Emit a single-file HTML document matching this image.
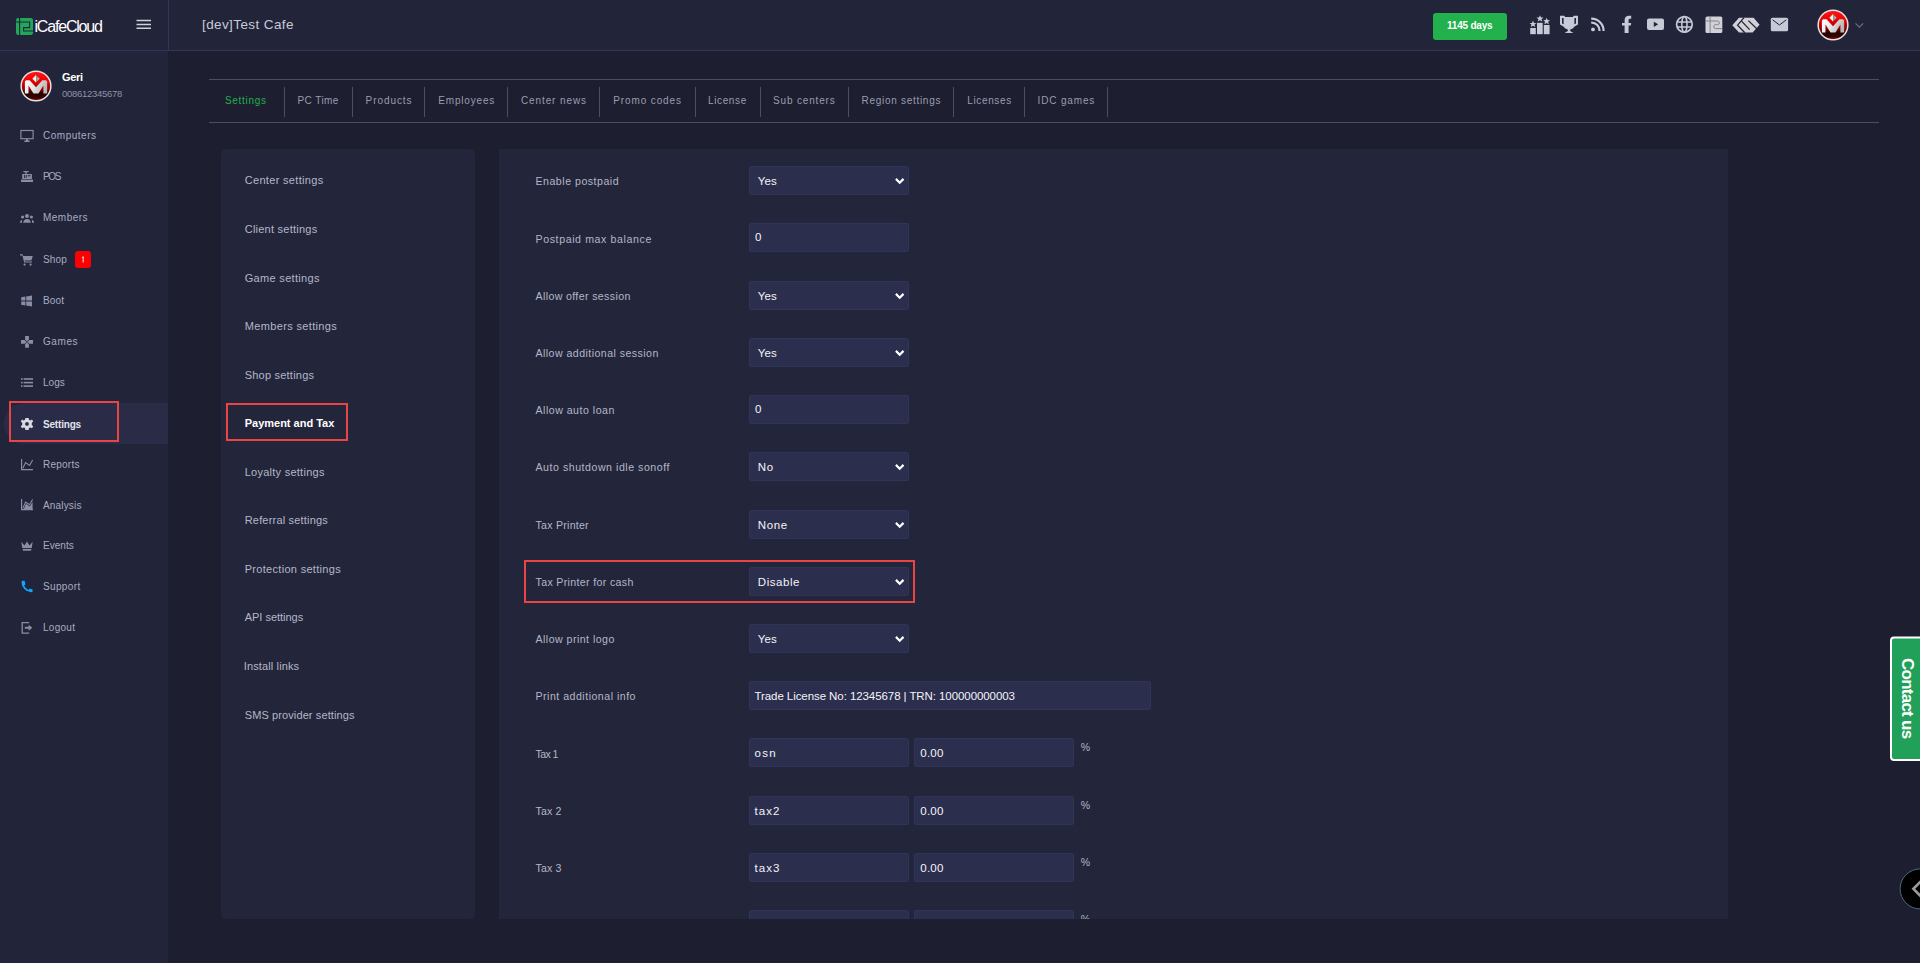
<!DOCTYPE html>
<html><head><meta charset="utf-8"><title>iCafeCloud</title>
<style>
html,body{margin:0;padding:0;width:1920px;height:963px;overflow:hidden;background:#1d1e2f;font-family:"Liberation Sans",sans-serif;}
.t{position:absolute;white-space:pre;line-height:1;}
.a{position:absolute;}
svg{position:absolute;overflow:visible;}
</style></head><body>
<!-- header -->
<div class="a" style="left:0;top:0;width:1920px;height:50px;background:#22243a;"></div>
<div class="a" style="left:0;top:50px;width:1920px;height:1px;background:#33365a;"></div>
<div class="a" style="left:168px;top:0;width:1px;height:50px;background:#33365a;"></div>
<!-- sidebar -->
<div class="a" style="left:0;top:51px;width:168px;height:912px;background:#22243a;"></div>
<!-- active settings bg -->
<div class="a" style="left:4px;top:403px;width:164px;height:41px;background:#292b47;border-radius:20px 0 0 20px;"></div>
<!-- tabs lines -->
<div class="a" style="left:209px;top:79px;width:1670px;height:1px;background:#4b4e64;"></div>
<div class="a" style="left:209px;top:122px;width:1670px;height:1px;background:#4b4e64;"></div>
<div class="a" style="left:284px;top:87px;width:1px;height:30px;background:#4b4e64;"></div><div class="a" style="left:352px;top:87px;width:1px;height:30px;background:#4b4e64;"></div><div class="a" style="left:424px;top:87px;width:1px;height:30px;background:#4b4e64;"></div><div class="a" style="left:507px;top:87px;width:1px;height:30px;background:#4b4e64;"></div><div class="a" style="left:599px;top:87px;width:1px;height:30px;background:#4b4e64;"></div><div class="a" style="left:695px;top:87px;width:1px;height:30px;background:#4b4e64;"></div><div class="a" style="left:760px;top:87px;width:1px;height:30px;background:#4b4e64;"></div><div class="a" style="left:848px;top:87px;width:1px;height:30px;background:#4b4e64;"></div><div class="a" style="left:953px;top:87px;width:1px;height:30px;background:#4b4e64;"></div><div class="a" style="left:1024px;top:87px;width:1px;height:30px;background:#4b4e64;"></div><div class="a" style="left:1107px;top:87px;width:1px;height:30px;background:#4b4e64;"></div>
<!-- panels -->
<div class="a" style="left:221px;top:149px;width:254px;height:770px;background:#23253a;border-radius:5px;"></div>
<div class="a" style="left:499px;top:149px;width:1229px;height:770px;background:#23253a;overflow:hidden;"></div>
<svg width="1920" height="963" viewBox="0 0 1920 963" style="left:0;top:0">
<!-- logo icon -->
<rect x="16" y="18" width="17" height="17" rx="2.2" fill="#21a65a"/>
<path d="M19.6 18 V35 M16 22 H29.6 V27.6 H23.6 V31 H33" stroke="#22243a" stroke-width="1.1" fill="none"/>
<!-- hamburger -->
<path d="M136.5 20.6 H151 M136.5 24.4 H151 M136.5 28.2 H151" stroke="#cfd1dc" stroke-width="1.5"/>
<g fill="#8a8da5" stroke="none">
<!-- computers -->
<rect x="20.9" y="130.5" width="12.2" height="8.2" fill="none" stroke="#8a8da5" stroke-width="1.15"/>
<path d="M26 139 H28 V140.6 H29.6 V142 H24.4 V140.6 H26 Z"/>
<!-- POS -->
<path d="M23.3 171 H28.6 V172.8 H26.4 V174 H22.2 V179 H31.9 V174 H26.4 V172.8" fill="none" stroke="#8a8da5" stroke-width="0"/>
<rect x="23.4" y="171" width="5.2" height="1.3"/>
<rect x="25.4" y="172" width="1.2" height="2"/>
<rect x="22.2" y="174" width="9.7" height="5"/>
<rect x="21" y="179.6" width="12" height="2.4"/>
<rect x="24" y="175" width="0.9" height="3" fill="#22243a"/>
<rect x="25.8" y="175" width="0.9" height="3" fill="#22243a"/>
<rect x="27.8" y="175.2" width="2.6" height="1.1" fill="#22243a"/>
<!-- members -->
<circle cx="27" cy="215.9" r="2"/>
<circle cx="22.6" cy="217" r="1.6"/>
<circle cx="31.4" cy="217" r="1.6"/>
<path d="M23.2 222.8 Q23.6 219 27 219 Q30.4 219 30.8 222.8 Z"/>
<path d="M19.8 222.8 Q20 220.2 22.3 219.8 Q21.8 221 22 222.8 Z"/>
<path d="M34.2 222.8 Q34 220.2 31.7 219.8 Q32.2 221 32 222.8 Z"/>
<!-- shop cart -->
<path d="M20 254.2 H22.6 L23.3 256 H32.8 L31.4 260.4 H24.6 L25 261.5 H32 V262.6 H24.2 L22.4 255.4 H20 Z"/>
<circle cx="24.6" cy="264.6" r="1.1"/>
<circle cx="30.6" cy="264.6" r="1.1"/>
<!-- boot windows -->
<path d="M21.2 297.2 L25.4 296.6 V300.6 H21.2 Z M26.2 296.5 L32 295.5 V300.6 H26.2 Z M21.2 301.4 H25.4 V305.4 L21.2 304.8 Z M26.2 301.4 H32 V306.6 L26.2 305.6 Z"/>
<!-- games -->
<path d="M25.1 336 H28.9 V339.6 L27 341.6 L25.1 339.6 Z M25.1 347.8 H28.9 V344.2 L27 342.2 L25.1 344.2 Z M21 340 V343.8 H24.6 L26.6 341.9 L24.6 340 Z M33 340 V343.8 H29.4 L27.4 341.9 L29.4 340 Z"/>
<!-- logs -->
<rect x="21" y="378.2" width="1.6" height="1.6"/><rect x="23.6" y="378.2" width="9.4" height="1.6"/>
<rect x="21" y="381.8" width="1.6" height="1.6"/><rect x="23.6" y="381.8" width="9.4" height="1.6"/>
<rect x="21" y="385.3" width="1.6" height="1.6"/><rect x="23.6" y="385.3" width="9.4" height="1.6"/>
<!-- reports -->
<path d="M21.6 459 V469.6 H33" fill="none" stroke="#8a8da5" stroke-width="1.2"/>
<path d="M22.8 468.2 L25.6 462.6 L29.6 465.4 L32.6 460" fill="none" stroke="#8a8da5" stroke-width="1.1"/>
<!-- analysis -->
<path d="M21.6 499 V509.6 H33" fill="none" stroke="#8a8da5" stroke-width="1.2"/>
<path d="M22.8 508.4 L25.6 502 L29.6 504.8 L32.6 499.4" fill="none" stroke="#8a8da5" stroke-width="1.1"/>
<path d="M23.8 509 L26 503.8 L29.8 506.4 L32.6 502 V509 Z"/>
<!-- events crown -->
<path d="M21.4 541.8 L24.4 545.4 L27 541.6 L29.6 545.4 L32.6 541.8 L31.8 548 H22.2 Z"/>
<rect x="22.8" y="548.9" width="8.4" height="1.8"/>
<!-- logout -->
<path d="M29.2 622.6 H22.2 V633.1 H29.2" fill="none" stroke="#8a8da5" stroke-width="1.3"/>
<path d="M24.8 626.8 H28.6 V624.8 L32.4 627.8 L28.6 630.8 V628.8 H24.8 Z"/>
</g>
<!-- settings gear white -->
<g transform="translate(27,423.9)">
<path fill="#d8d9e2" fill-rule="evenodd" d="M-1.6 -6 H1.6 L2 -4.2 L3.3 -3.5 L5 -4.3 L6.2 -2.3 L4.8 -1.1 V1.1 L6.2 2.3 L5 4.3 L3.3 3.5 L2 4.2 L1.6 6 H-1.6 L-2 4.2 L-3.3 3.5 L-5 4.3 L-6.2 2.3 L-4.8 1.1 V-1.1 L-6.2 -2.3 L-5 -4.3 L-3.3 -3.5 L-2 -4.2 Z M0 -1.9 A1.9 1.9 0 1 0 0 1.9 A1.9 1.9 0 1 0 0 -1.9 Z"/>
</g>
<!-- support phone -->
<path fill="#0aa8ff" d="M21.6 582.4 Q21.4 581 22.6 580.8 H24.6 L25.4 584.6 L24 585.6 Q25.6 588.8 28.6 590 L29.6 588.6 L32.6 589.6 V591.4 Q32.4 592.2 31.4 592.2 Q25.4 591.8 22.6 586.6 Q21.6 584.6 21.6 582.4 Z"/>
<!-- badge -->
<rect x="75" y="251" width="16" height="17" rx="3" fill="#ff0000"/>
<path d="M82 257 L83.6 256.3 V262.4 H82.7 V257.6 L82 257.9 Z" fill="#ffffff"/>
</svg>
<svg width="1920" height="963" viewBox="0 0 1920 963" style="left:0;top:0">
<defs>
<linearGradient id="rg" x1="0" y1="0" x2="0" y2="1">
<stop offset="0.05" stop-color="#ff1212"/><stop offset="0.35" stop-color="#e80000"/><stop offset="0.6" stop-color="#a00000"/><stop offset="0.76" stop-color="#2a0000"/><stop offset="0.9" stop-color="#300000"/><stop offset="1" stop-color="#8a0000"/>
</linearGradient>
<linearGradient id="mg" x1="0" y1="0" x2="1" y2="0.3"><stop offset="0" stop-color="#ffffff"/><stop offset="0.5" stop-color="#e6e6e6"/><stop offset="1" stop-color="#b8b8b8"/></linearGradient>
<linearGradient id="dg" x1="0" y1="0" x2="1" y2="0"><stop offset="0.45" stop-color="#f4f4f4"/><stop offset="0.55" stop-color="#8c8c8c"/><stop offset="1" stop-color="#cfcfcf"/></linearGradient>
<g id="av">
<circle cx="16" cy="16" r="15.6" fill="#e4e4e4"/>
<circle cx="16" cy="16" r="14.1" fill="url(#rg)"/>
<path d="M4.9 23.6 V11.5 L6 10.3 H9.6 L16 17.2 L22.4 10.3 H26 L27.15 11.5 V23.6 H23.4 V15.5 L18.5 23.6 H13.5 L8.5 15.5 V23.6 Z" fill="url(#mg)"/>
<path d="M16 5.1 L19.6 8.8 L16 12.6 L12.4 8.8 Z" fill="url(#dg)"/>
</g>
</defs>
<use href="#av" x="1817" y="9"/>
<use href="#av" x="20" y="70"/>
<!-- chevron dropdown -->
<path d="M1855.5 23.4 L1859.4 27.2 L1863.2 23.4" fill="none" stroke="#6d7196" stroke-width="1.1"/>
<!-- green button -->
<rect x="1433" y="13" width="74" height="27" rx="3" fill="#22b14c"/>
<g fill="#c6c9d6">
<!-- ranking -->
<rect x="1530.2" y="28" width="5.6" height="6.2"/>
<rect x="1537" y="22.8" width="5.7" height="11.4"/>
<rect x="1543.8" y="25" width="5.8" height="9.2"/>
<path id="st" d="M0 -3.1 L0.9 -1 L3.1 -0.9 L1.4 0.5 L2 2.7 L0 1.5 L-2 2.7 L-1.4 0.5 L-3.1 -0.9 L-0.9 -1 Z" transform="translate(1533,24) scale(1.12)"/>
<use href="#st" x="7" y="-5.4"/>
<use href="#st" x="13.6" y="-2.8"/>
<!-- trophy -->
<path fill-rule="evenodd" d="M1560 15.8 H1564.4 L1565 17 H1573 L1573.6 15.8 H1578 V24.6 L1574.6 26.6 Q1573 29 1570.2 29.6 V31 L1573.4 33 H1564.6 L1567.8 31 V29.6 Q1565 29 1563.4 26.6 L1560 24.6 Z M1562 18 V23.4 L1563.6 24.2 V18 Z M1576 18 V23.4 L1574.4 24.2 V18 Z"/>
<!-- rss -->
<circle cx="1593" cy="29.4" r="1.9"/>
<path d="M1591.2 22.6 A8 8 0 0 1 1599.6 31" fill="none" stroke="#c6c9d6" stroke-width="2.2"/>
<path d="M1591.2 18.6 A12.2 12.2 0 0 1 1603.6 31" fill="none" stroke="#c6c9d6" stroke-width="2.2"/>
<!-- facebook f -->
<path d="M1624.6 33 V25.6 H1622 V23 H1624.6 V20.4 Q1624.6 15.8 1629 15.8 H1631.2 V18.8 H1629.8 Q1628.6 18.8 1628.6 20 V23 H1631.2 L1630.8 25.6 H1628.6 V33 Z"/>
<!-- youtube -->
<path fill-rule="evenodd" d="M1649 18.6 H1662 Q1664 18.6 1664 20.6 V28.1 Q1664 30.1 1662 30.1 H1649 Q1647 30.1 1647 28.1 V20.6 Q1647 18.6 1649 18.6 Z M1653.8 21.8 V26.9 L1658.2 24.35 Z"/>
<!-- globe -->
<circle cx="1684.4" cy="24.4" r="7.8" fill="none" stroke="#c6c9d6" stroke-width="1.7"/>
<ellipse cx="1684.4" cy="24.4" rx="2.6" ry="7.8" fill="none" stroke="#c6c9d6" stroke-width="1.5"/>
<path d="M1677 21.9 H1691.8 M1677 26.9 H1691.8" stroke="#c6c9d6" stroke-width="1.5"/>
</g>
<!-- i2 -->
<rect x="1705.5" y="16.4" width="16.8" height="16.6" rx="1.6" fill="#d2d2d6"/>
<path d="M1710.1 16.4 V33 M1705.5 21 H1717.5 Q1719.4 21 1719.4 22.8 Q1719.4 24.6 1717.5 24.6 H1715.6 Q1713.8 24.6 1713.8 26.6 Q1713.8 28.6 1715.6 28.6 H1722.3" stroke="#80828f" stroke-width="1" fill="none"/>
<!-- gg logo -->
<path d="M1732.3 25.2 L1739 17.8 H1753.6 L1759.6 24.8 L1752.6 32.6 H1739 Z" fill="#d2d2d6"/>
<path d="M1744 17.6 L1737.6 25.2 L1744.8 32.8 M1741.8 21.4 L1749.6 29.6 M1748.4 20.6 L1756.8 28.8" stroke="#22243a" stroke-width="1.3" fill="none"/>
<!-- mail -->
<rect x="1770.8" y="17.7" width="17.3" height="13.6" rx="1.5" fill="#c6c9d6"/>
<path d="M1772.6 19.8 L1779.45 25 L1786.3 19.8" fill="none" stroke="#22243a" stroke-width="1"/>
<!-- contact us -->
<rect x="1891" y="637.5" width="32" height="122.5" rx="3" fill="#21a05a" stroke="#ffffff" stroke-width="2"/>
<!-- circle btn -->
<circle cx="1920.1" cy="888.9" r="20" fill="#000000" stroke="#4a6a80" stroke-width="1"/>
<path d="M1921.5 880.6 L1913.4 888.8 L1921.5 897" fill="none" stroke="#9c9c9c" stroke-width="2.6"/>
</svg>
<div class="a" style="left:0;top:0;width:1920px;height:919px;overflow:hidden"><div style="position:absolute;left:749px;top:166px;width:160px;height:29px;background:#2c2e4e;border:1px solid #313459;border-radius:2px;box-sizing:border-box;"></div><div style="position:absolute;left:749px;top:223px;width:160px;height:29px;background:#2c2e4e;border:1px solid #313459;border-radius:2px;box-sizing:border-box;"></div><div style="position:absolute;left:749px;top:281px;width:160px;height:29px;background:#2c2e4e;border:1px solid #313459;border-radius:2px;box-sizing:border-box;"></div><div style="position:absolute;left:749px;top:338px;width:160px;height:29px;background:#2c2e4e;border:1px solid #313459;border-radius:2px;box-sizing:border-box;"></div><div style="position:absolute;left:749px;top:395px;width:160px;height:29px;background:#2c2e4e;border:1px solid #313459;border-radius:2px;box-sizing:border-box;"></div><div style="position:absolute;left:749px;top:452px;width:160px;height:29px;background:#2c2e4e;border:1px solid #313459;border-radius:2px;box-sizing:border-box;"></div><div style="position:absolute;left:749px;top:510px;width:160px;height:29px;background:#2c2e4e;border:1px solid #313459;border-radius:2px;box-sizing:border-box;"></div><div style="position:absolute;left:749px;top:567px;width:160px;height:29px;background:#2c2e4e;border:1px solid #313459;border-radius:2px;box-sizing:border-box;"></div><div style="position:absolute;left:749px;top:624px;width:160px;height:29px;background:#2c2e4e;border:1px solid #313459;border-radius:2px;box-sizing:border-box;"></div><div style="position:absolute;left:749px;top:681px;width:402px;height:29px;background:#2c2e4e;border:1px solid #313459;border-radius:2px;box-sizing:border-box;"></div><div style="position:absolute;left:749px;top:738px;width:160px;height:29px;background:#2c2e4e;border:1px solid #313459;border-radius:2px;box-sizing:border-box;"></div><div style="position:absolute;left:914px;top:738px;width:160px;height:29px;background:#2c2e4e;border:1px solid #313459;border-radius:2px;box-sizing:border-box;"></div><div style="position:absolute;left:749px;top:796px;width:160px;height:29px;background:#2c2e4e;border:1px solid #313459;border-radius:2px;box-sizing:border-box;"></div><div style="position:absolute;left:914px;top:796px;width:160px;height:29px;background:#2c2e4e;border:1px solid #313459;border-radius:2px;box-sizing:border-box;"></div><div style="position:absolute;left:749px;top:853px;width:160px;height:29px;background:#2c2e4e;border:1px solid #313459;border-radius:2px;box-sizing:border-box;"></div><div style="position:absolute;left:914px;top:853px;width:160px;height:29px;background:#2c2e4e;border:1px solid #313459;border-radius:2px;box-sizing:border-box;"></div><div style="position:absolute;left:749px;top:910px;width:160px;height:29px;background:#2c2e4e;border:1px solid #313459;border-radius:2px;box-sizing:border-box;"></div><div style="position:absolute;left:914px;top:910px;width:160px;height:29px;background:#2c2e4e;border:1px solid #313459;border-radius:2px;box-sizing:border-box;"></div>
<span class="t" style="left:202.00px;top:18.00px;font-size:13.5px;font-weight:400;color:#c8cbd8;letter-spacing:0.401px;">[dev]Test Cafe</span><span class="t" style="left:1447.00px;top:21.00px;font-size:10px;font-weight:700;color:#ffffff;letter-spacing:-0.213px;">1145 days</span><span class="t" style="left:34.50px;top:19.00px;font-size:16px;font-weight:400;color:#ffffff;letter-spacing:-1.195px;">iCafeCloud</span><span class="t" style="left:62.00px;top:72.00px;font-size:11px;font-weight:700;color:#ffffff;letter-spacing:-0.318px;">Geri</span><span class="t" style="left:62.00px;top:89.00px;font-size:9.5px;font-weight:400;color:#8e92a8;letter-spacing:-0.283px;">008612345678</span><span class="t" style="left:43.00px;top:131.00px;font-size:10px;font-weight:400;color:#a9acc0;letter-spacing:0.512px;">Computers</span><span class="t" style="left:43.00px;top:172.00px;font-size:10px;font-weight:400;color:#a9acc0;letter-spacing:-1.324px;">POS</span><span class="t" style="left:43.00px;top:213.00px;font-size:10px;font-weight:400;color:#a9acc0;letter-spacing:0.471px;">Members</span><span class="t" style="left:43.00px;top:255.00px;font-size:10px;font-weight:400;color:#a9acc0;letter-spacing:0.136px;">Shop</span><span class="t" style="left:43.00px;top:296.00px;font-size:10px;font-weight:400;color:#a9acc0;letter-spacing:0.169px;">Boot</span><span class="t" style="left:43.00px;top:337.00px;font-size:10px;font-weight:400;color:#a9acc0;letter-spacing:0.592px;">Games</span><span class="t" style="left:43.00px;top:378.00px;font-size:10px;font-weight:400;color:#a9acc0;letter-spacing:0.005px;">Logs</span><span class="t" style="left:43.00px;top:420.00px;font-size:10px;font-weight:700;color:#e2e3ea;letter-spacing:-0.184px;">Settings</span><span class="t" style="left:43.00px;top:460.00px;font-size:10px;font-weight:400;color:#a9acc0;letter-spacing:0.231px;">Reports</span><span class="t" style="left:43.00px;top:501.00px;font-size:10px;font-weight:400;color:#a9acc0;letter-spacing:0.166px;">Analysis</span><span class="t" style="left:43.00px;top:541.00px;font-size:10px;font-weight:400;color:#a9acc0;letter-spacing:0.046px;">Events</span><span class="t" style="left:43.00px;top:582.00px;font-size:10px;font-weight:400;color:#a9acc0;letter-spacing:0.359px;">Support</span><span class="t" style="left:43.00px;top:623.00px;font-size:10px;font-weight:400;color:#a9acc0;letter-spacing:0.278px;">Logout</span><span class="t" style="left:225.00px;top:96.00px;font-size:10px;font-weight:400;color:#22b14c;letter-spacing:0.695px;">Settings</span><span class="t" style="left:297.40px;top:96.00px;font-size:10px;font-weight:400;color:#9a9db1;letter-spacing:0.440px;">PC Time</span><span class="t" style="left:365.60px;top:96.00px;font-size:10px;font-weight:400;color:#9a9db1;letter-spacing:0.920px;">Products</span><span class="t" style="left:438.30px;top:96.00px;font-size:10px;font-weight:400;color:#9a9db1;letter-spacing:0.817px;">Employees</span><span class="t" style="left:521.00px;top:96.00px;font-size:10px;font-weight:400;color:#9a9db1;letter-spacing:0.886px;">Center news</span><span class="t" style="left:613.30px;top:96.00px;font-size:10px;font-weight:400;color:#9a9db1;letter-spacing:0.878px;">Promo codes</span><span class="t" style="left:708.00px;top:96.00px;font-size:10px;font-weight:400;color:#9a9db1;letter-spacing:0.632px;">License</span><span class="t" style="left:773.00px;top:96.00px;font-size:10px;font-weight:400;color:#9a9db1;letter-spacing:0.834px;">Sub centers</span><span class="t" style="left:861.50px;top:96.00px;font-size:10px;font-weight:400;color:#9a9db1;letter-spacing:0.712px;">Region settings</span><span class="t" style="left:967.20px;top:96.00px;font-size:10px;font-weight:400;color:#9a9db1;letter-spacing:0.655px;">Licenses</span><span class="t" style="left:1037.50px;top:96.00px;font-size:10px;font-weight:400;color:#9a9db1;letter-spacing:0.848px;">IDC games</span><span class="t" style="left:244.70px;top:175.00px;font-size:11px;font-weight:400;color:#b4b7c8;letter-spacing:0.323px;">Center settings</span><span class="t" style="left:244.70px;top:224.00px;font-size:11px;font-weight:400;color:#b4b7c8;letter-spacing:0.244px;">Client settings</span><span class="t" style="left:244.70px;top:273.00px;font-size:11px;font-weight:400;color:#b4b7c8;letter-spacing:0.323px;">Game settings</span><span class="t" style="left:244.70px;top:321.00px;font-size:11px;font-weight:400;color:#b4b7c8;letter-spacing:0.353px;">Members settings</span><span class="t" style="left:244.70px;top:370.00px;font-size:11px;font-weight:400;color:#b4b7c8;letter-spacing:0.220px;">Shop settings</span><span class="t" style="left:244.70px;top:418.00px;font-size:11px;font-weight:700;color:#ffffff;letter-spacing:-0.003px;">Payment and Tax</span><span class="t" style="left:244.70px;top:467.00px;font-size:11px;font-weight:400;color:#b4b7c8;letter-spacing:0.259px;">Loyalty settings</span><span class="t" style="left:244.70px;top:515.00px;font-size:11px;font-weight:400;color:#b4b7c8;letter-spacing:0.188px;">Referral settings</span><span class="t" style="left:244.70px;top:564.00px;font-size:11px;font-weight:400;color:#b4b7c8;letter-spacing:0.306px;">Protection settings</span><span class="t" style="left:244.70px;top:612.00px;font-size:11px;font-weight:400;color:#b4b7c8;letter-spacing:-0.018px;">API settings</span><span class="t" style="left:243.70px;top:661.00px;font-size:11px;font-weight:400;color:#b4b7c8;letter-spacing:0.134px;">Install links</span><span class="t" style="left:244.70px;top:710.00px;font-size:11px;font-weight:400;color:#b4b7c8;letter-spacing:0.110px;">SMS provider settings</span><span class="t" style="left:535.50px;top:176.00px;font-size:10.6px;font-weight:400;color:#b4b7c8;letter-spacing:0.508px;">Enable postpaid</span><span class="t" style="left:535.50px;top:234.00px;font-size:10.6px;font-weight:400;color:#b4b7c8;letter-spacing:0.608px;">Postpaid max balance</span><span class="t" style="left:535.50px;top:291.00px;font-size:10.6px;font-weight:400;color:#b4b7c8;letter-spacing:0.370px;">Allow offer session</span><span class="t" style="left:535.50px;top:348.00px;font-size:10.6px;font-weight:400;color:#b4b7c8;letter-spacing:0.449px;">Allow additional session</span><span class="t" style="left:535.50px;top:405.00px;font-size:10.6px;font-weight:400;color:#b4b7c8;letter-spacing:0.496px;">Allow auto loan</span><span class="t" style="left:535.50px;top:462.00px;font-size:10.6px;font-weight:400;color:#b4b7c8;letter-spacing:0.534px;">Auto shutdown idle sonoff</span><span class="t" style="left:535.50px;top:520.00px;font-size:10.6px;font-weight:400;color:#b4b7c8;letter-spacing:0.250px;">Tax Printer</span><span class="t" style="left:535.50px;top:577.00px;font-size:10.6px;font-weight:400;color:#b4b7c8;letter-spacing:0.349px;">Tax Printer for cash</span><span class="t" style="left:535.50px;top:634.00px;font-size:10.6px;font-weight:400;color:#b4b7c8;letter-spacing:0.464px;">Allow print logo</span><span class="t" style="left:535.50px;top:691.00px;font-size:10.6px;font-weight:400;color:#b4b7c8;letter-spacing:0.494px;">Print additional info</span><span class="t" style="left:535.50px;top:749.00px;font-size:10.6px;font-weight:400;color:#b4b7c8;letter-spacing:-0.632px;">Tax 1</span><span class="t" style="left:535.50px;top:806.00px;font-size:10.6px;font-weight:400;color:#b4b7c8;letter-spacing:0.118px;">Tax 2</span><span class="t" style="left:535.50px;top:863.00px;font-size:10.6px;font-weight:400;color:#b4b7c8;letter-spacing:0.118px;">Tax 3</span><span class="t" style="left:757.80px;top:176.00px;font-size:11.5px;font-weight:400;color:#f4f4f8;letter-spacing:0.145px;">Yes</span><span class="t" style="left:755.00px;top:232.00px;font-size:11.5px;font-weight:400;color:#f4f4f8;letter-spacing:0.000px;">0</span><span class="t" style="left:757.80px;top:291.00px;font-size:11.5px;font-weight:400;color:#f4f4f8;letter-spacing:0.145px;">Yes</span><span class="t" style="left:757.80px;top:348.00px;font-size:11.5px;font-weight:400;color:#f4f4f8;letter-spacing:0.145px;">Yes</span><span class="t" style="left:755.00px;top:404.00px;font-size:11.5px;font-weight:400;color:#f4f4f8;letter-spacing:0.000px;">0</span><span class="t" style="left:757.80px;top:462.00px;font-size:11.5px;font-weight:400;color:#f4f4f8;letter-spacing:0.695px;">No</span><span class="t" style="left:757.80px;top:520.00px;font-size:11.5px;font-weight:400;color:#f4f4f8;letter-spacing:0.635px;">None</span><span class="t" style="left:757.80px;top:577.00px;font-size:11.5px;font-weight:400;color:#f4f4f8;letter-spacing:0.557px;">Disable</span><span class="t" style="left:757.80px;top:634.00px;font-size:11.5px;font-weight:400;color:#f4f4f8;letter-spacing:0.145px;">Yes</span><span class="t" style="left:754.50px;top:691.00px;font-size:11.5px;font-weight:400;color:#f4f4f8;letter-spacing:-0.075px;">Trade License No: 12345678 | TRN: 100000000003</span><span class="t" style="left:754.50px;top:748.00px;font-size:11.5px;font-weight:400;color:#f4f4f8;letter-spacing:1.277px;">osn</span><span class="t" style="left:920.30px;top:748.00px;font-size:11.5px;font-weight:400;color:#f4f4f8;letter-spacing:0.238px;">0.00</span><span class="t" style="left:1080.70px;top:742.00px;font-size:10.5px;font-weight:400;color:#b4b7c8;letter-spacing:0.000px;">%</span><span class="t" style="left:754.50px;top:806.00px;font-size:11.5px;font-weight:400;color:#f4f4f8;letter-spacing:1.020px;">tax2</span><span class="t" style="left:920.30px;top:806.00px;font-size:11.5px;font-weight:400;color:#f4f4f8;letter-spacing:0.238px;">0.00</span><span class="t" style="left:1080.70px;top:800.00px;font-size:10.5px;font-weight:400;color:#b4b7c8;letter-spacing:0.000px;">%</span><span class="t" style="left:754.50px;top:863.00px;font-size:11.5px;font-weight:400;color:#f4f4f8;letter-spacing:1.020px;">tax3</span><span class="t" style="left:920.30px;top:863.00px;font-size:11.5px;font-weight:400;color:#f4f4f8;letter-spacing:0.238px;">0.00</span><span class="t" style="left:1080.70px;top:857.00px;font-size:10.5px;font-weight:400;color:#b4b7c8;letter-spacing:0.000px;">%</span><span class="t" style="left:1080.70px;top:914.00px;font-size:10.5px;font-weight:400;color:#b4b7c8;letter-spacing:0.000px;">%</span></div><div class="a" style="left:9px;top:401px;width:110px;height:41px;border:2px solid #ea4444;box-sizing:border-box;"></div><div class="a" style="left:226px;top:403px;width:122px;height:38px;border:2px solid #ea4444;box-sizing:border-box;"></div><div class="a" style="left:524px;top:560px;width:391px;height:43px;border:2px solid #ea4444;box-sizing:border-box;"></div>
<svg width="1920" height="963" style="left:0;top:0"><path d="M895.9 178.9 L899.7 182.7 L903.5 178.9" fill="none" stroke="#ffffff" stroke-width="2.2"/><path d="M895.9 293.9 L899.7 297.7 L903.5 293.9" fill="none" stroke="#ffffff" stroke-width="2.2"/><path d="M895.9 350.9 L899.7 354.7 L903.5 350.9" fill="none" stroke="#ffffff" stroke-width="2.2"/><path d="M895.9 464.9 L899.7 468.7 L903.5 464.9" fill="none" stroke="#ffffff" stroke-width="2.2"/><path d="M895.9 522.9 L899.7 526.7 L903.5 522.9" fill="none" stroke="#ffffff" stroke-width="2.2"/><path d="M895.9 579.9 L899.7 583.7 L903.5 579.9" fill="none" stroke="#ffffff" stroke-width="2.2"/><path d="M895.9 636.9 L899.7 640.7 L903.5 636.9" fill="none" stroke="#ffffff" stroke-width="2.2"/></svg><span class="t" style="left:1916.4px;top:657.8px;font-size:17px;font-weight:700;color:#fff;transform-origin:0 0;transform:rotate(90deg);letter-spacing:-0.75px">Contact us</span>
</body></html>
